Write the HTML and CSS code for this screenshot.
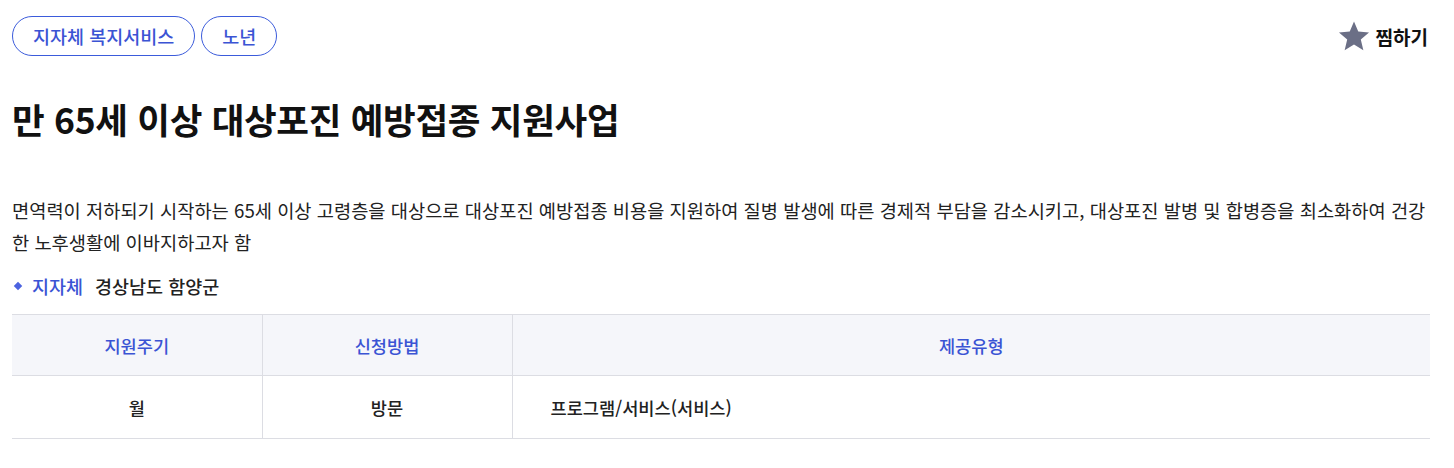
FILE: index.html
```html
<!DOCTYPE html>
<html lang="ko">
<head>
<meta charset="utf-8">
<link rel="stylesheet" href="styles.css">
</head>
<body>
<div class="page">
  <div class="top">
    <div class="tags">
      <span class="tag">지자체 복지서비스</span>
      <span class="tag">노년</span>
    </div>
    <button class="fav">
      <svg width="34" height="34" viewBox="0 0 24 24"><path d="M12 1.8l3 7.1 7.6.6-5.8 5 1.8 7.5L12 18l-6.6 4 1.8-7.5-5.8-5 7.6-.6z" fill="#6b6f86"/></svg>
      <span>찜하기</span>
    </button>
  </div>
  <h1 class="title">만 65세 이상 대상포진 예방접종 지원사업</h1>
  <p class="desc">면역력이 저하되기 시작하는 65세 이상 고령층을 대상으로 대상포진 예방접종 비용을 지원하여 질병 발생에 따른 경제적 부담을 감소시키고, 대상포진 발병 및 합병증을 최소화하여 건강한 노후생활에 이바지하고자 함</p>
  <div class="meta">
    <span class="bullet"></span>
    <span class="meta-label">지자체</span>
    <span class="meta-value">경상남도 함양군</span>
  </div>
  <table class="info">
    <thead>
      <tr><th class="c1">지원주기</th><th class="c2">신청방법</th><th>제공유형</th></tr>
    </thead>
    <tbody>
      <tr><td class="center">월</td><td class="center">방문</td><td class="left">프로그램/서비스(서비스)</td></tr>
    </tbody>
  </table>
</div>
</body>
</html>
```

FILE: styles.css
```css
* { box-sizing: border-box; }
html, body { margin: 0; padding: 0; background: #fff; }
body {
  font-family: "Noto Sans CJK KR", "Noto Sans", sans-serif;
  color: #111;
}
.page { padding: 16px 24px 0 12px; }
.top { display: flex; justify-content: space-between; align-items: center; }
.tags { display: flex; gap: 6px; }
.tag {
  display: inline-flex; align-items: center;
  height: 40px; padding: 0 20px;
  border: 1px solid #3b5bdb; border-radius: 20px;
  color: #3b54d4; font-size: 18.5px; font-weight: 500;
}
.fav {
  display: flex; align-items: center; gap: 5px;
  border: 0; background: none; padding: 0; margin-right: 2px;
  font-family: inherit; font-size: 19px; font-weight: 700; color: #111;
}
.title {
  margin: 38px 0 0; font-size: 35.5px; font-weight: 700; line-height: 50px; letter-spacing: -0.3px;
}
.desc {
  margin: 50px 0 0; font-size: 18.7px; line-height: 32px; color: #222; letter-spacing: 0;
  word-break: break-all;
}
.meta { display: flex; align-items: center; margin-top: 15px; font-size: 18.5px; height: 26px; }
.bullet {
  width: 6px; height: 6px; background: #4c63e0; transform: rotate(45deg);
  margin: 0 11px 0 3px;
}
.meta-label { color: #3b54d4; font-weight: 500; margin-right: 12px; }
.meta-value { font-weight: 500; color: #222; }
.info {
  margin-top: 15px; width: 1418px; border-collapse: collapse; font-size: 17.6px;
  border-top: 1px solid #dcdde3;
}
.info th {
  background: #f5f6fa; color: #3b54d4; font-weight: 500; height: 61px;
  border-bottom: 1px solid #dcdde3;
}
.info th + th, .info td + td { border-left: 1px solid #dcdde3; }
.info .c1, .info .c2 { width: 250px; }
.info td { height: 63px; border-bottom: 1px solid #dcdde3; font-weight: 500; color: #222; }
.info .center { text-align: center; }
.info .left { text-align: left; padding-left: 38px; }
```
